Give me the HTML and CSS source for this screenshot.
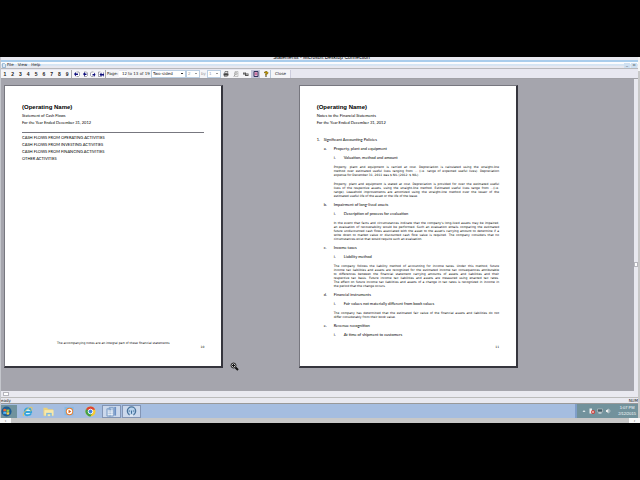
FILE: index.html
```html
<!DOCTYPE html>
<html lang="en">
<head>
    <meta charset="UTF-8">
    <meta name="viewport" content="width=device-width, initial-scale=1.0">
    <title>Statement Print Preview</title>
    <link rel="stylesheet" href="styles.css">
</head>
<body>
    <div class="session">
        <div class="desktop">
            <header class="titlebar"><span>Statements - Microsoft Desktop Connection</span></header>
            <nav class="menubar">
                <svg class="doc-icon" viewBox="0 0 8 10"><path d="M1 1h4l2 2v6H1z" fill="#dfeaf5" stroke="#5689b5"/></svg>
                <button>File</button>
                <button>View</button>
                <button>Help</button>
                <span class="window-buttons"><button>_</button><button>▫</button></span>
            </nav>
            <div class="toolbar">
                <div class="numbers">
                    <button>1</button><button>2</button><button>3</button><button>4</button><button>5</button><button>6</button><button>7</button><button>8</button><button>9</button>
                </div>
                <div class="steps">
                    <button aria-label="First page"><svg viewBox="0 0 12 12"><path d="M5 2h5l1 2v5l-2 2H5" fill="#fff" stroke="#556"/><path d="M0 6l4-4v3h4v3H4v3z" fill="#10107c"/></svg></button>
                    <button aria-label="Previous page"><svg viewBox="0 0 12 12"><path d="M4 2h5l2 2v5l-2 2H4" fill="#fff" stroke="#556"/><path d="M2 6l4-4v3h3v3H6v3z" fill="#10107c"/></svg></button>
                    <button aria-label="Next page"><svg viewBox="0 0 12 12"><path d="M7 2H3L1 4v5l2 2h4" fill="#fff" stroke="#556"/><path d="M11 7L8 3v3H5v3h3v3z" fill="#10107c"/></svg></button>
                    <button aria-label="Last page"><svg viewBox="0 0 12 12"><path d="M5 2H1v9h5" fill="#fff" stroke="#556"/><path d="M3 7l4-4v3h4v3H7v3zM11 3h1v8h-1z" fill="#10107c"/></svg></button>
                </div>
                <label class="page-label" for="page">Page:</label>
                <input class="page-input" id="page" type="text" value="12">
                <span class="page-total">to 13 of 19</span>
                <select class="layout-select" aria-label="Layout"><option>Two-sided</option></select>
                <select class="small-select" id="across" aria-label="Pages across" disabled><option>2</option></select>
                <label class="by" for="down">by</label>
                <select class="small-select" id="down" disabled><option>1</option></select>
                <div class="tools">
                    <button aria-label="Print"><svg viewBox="0 0 12 12"><path d="M4 1h6L9 5H3z" fill="#ddd" stroke="#333"/><path d="M1 5h10v4H9v2H2V9H1z" fill="#444"/><path d="M3 8h5v1H3z" fill="#ccc"/></svg></button>
                    <button aria-label="Zoom"><svg viewBox="0 0 12 12"><path d="M4 1h6v10H3V5z" fill="#eee" stroke="#999"/><circle cx="6" cy="5" r="2" fill="none" stroke="#777"/><path d="M5 7l-4 4" stroke="#777"/></svg></button>
                    <button aria-label="Margins"><svg viewBox="0 0 12 12"><path d="M0 3h6v2h5v5H4V7H0z" fill="#555"/><path d="M1 4h3M6 7h4" stroke="#eee"/></svg></button>
                    <button class="pressed" aria-label="Page frame"><svg viewBox="0 0 12 12"><path d="M2 1h8v10H2z" fill="#e7bfd2" stroke="#30305c" stroke-width="2"/><path d="M6 3v5" stroke="#b02070" stroke-width="2"/></svg></button>
                    <button aria-label="Help"><svg viewBox="0 0 12 12"><path d="M3 4V2l2-1h3l2 2v2L7 7v2H5V6l2-2z" fill="#c9a000" stroke="#5a4700"/><path d="M5 10h2v2H5z" fill="#333"/></svg></button>
                </div>
                <button class="close">Close</button>
            </div>
            <div class="workspace">
                <main class="pages">
                    <article class="sheet">
                        <h1>(Operating Name)</h1>
                        <p class="sub">Statement of Cash Flows</p>
                        <p class="sub">For the Year Ended December 31, 2012</p>
                        <hr>
                        <p class="flow">CASH FLOWS FROM OPERATING ACTIVITIES</p>
                        <p class="flow">CASH FLOWS FROM INVESTING ACTIVITIES</p>
                        <p class="flow">CASH FLOWS FROM FINANCING ACTIVITIES</p>
                        <p class="flow">OTHER ACTIVITIES</p>
                        <footer>
                            <p class="footnote">The accompanying notes are an integral part of these financial statements</p>
                            <p class="folio">10</p>
                        </footer>
                    </article>
                    <article class="sheet">
                        <h1>(Operating Name)</h1>
                        <p class="sub">Notes to the Financial Statements</p>
                        <p class="sub">For the Year Ended December 31, 2012</p>
                        <div class="notes">
                            <h2 class="level-1"><span>1.</span>Significant Accounting Policies</h2>
                            <h3 class="level-2"><span>a.</span>Property, plant and equipment</h3>
                            <h4 class="level-3"><span>i.</span>Valuation, method and amount</h4>
                            <p class="body">
                                <span>Property, plant and equipment is carried at cost. Depreciation is calculated using the straight-line</span>
                                <span>method over estimated useful lives ranging from ... (i.e. range of expected useful lives). Depreciation</span>
                                <span>expense for December 31, 2011 was $ NIL (2012: $ NIL).</span>
                            </p>
                            <p class="body">
                                <span>Property, plant and equipment is stated at cost. Depreciation is provided for over the estimated useful</span>
                                <span>lives of the respective assets, using the straight-line method. Estimated useful lives range from ...(i.e.</span>
                                <span>range). Leasehold improvements are amortized using the straight-line method over the lesser of the</span>
                                <span>estimated useful life of the asset or the life of the lease.</span>
                            </p>
                            <h3 class="level-2"><span>b.</span>Impairment of long-lived assets</h3>
                            <h4 class="level-3"><span>i.</span>Description of process for evaluation</h4>
                            <p class="body">
                                <span>In the event that facts and circumstances indicate that the company's long-lived assets may be impaired,</span>
                                <span>an evaluation of recoverability would be performed. Such an evaluation entails comparing the estimated</span>
                                <span>future undiscounted cash flows associated with the asset to the asset's carrying amount to determine if a</span>
                                <span>write down to market value or discounted cash flow value is required. The company considers that no</span>
                                <span>circumstances exist that would require such an evaluation.</span>
                            </p>
                            <h3 class="level-2"><span>c.</span>Income taxes</h3>
                            <h4 class="level-3"><span>i.</span>Liability method</h4>
                            <p class="body">
                                <span>The company follows the liability method of accounting for income taxes. Under this method, future</span>
                                <span>income tax liabilities and assets are recognized for the estimated income tax consequences attributable</span>
                                <span>to differences between the financial statement carrying amounts of assets and liabilities and their</span>
                                <span>respective tax basis. Future income tax liabilities and assets are measured using enacted tax rates.</span>
                                <span>The effect on future income tax liabilities and assets of a change in tax rates is recognized in income in</span>
                                <span>the period that the change occurs.</span>
                            </p>
                            <h3 class="level-2"><span>d.</span>Financial instruments</h3>
                            <h4 class="level-3"><span>i.</span>Fair values not materially different from book values</h4>
                            <p class="body">
                                <span>The company has determined that the estimated fair value of the financial assets and liabilities do not</span>
                                <span>differ considerably from their book value.</span>
                            </p>
                            <h3 class="level-2"><span>e.</span>Revenue recognition</h3>
                            <h4 class="level-3"><span>i.</span>At time of shipment to customers</h4>
                        </div>
                        <footer>
                            <p class="folio">11</p>
                        </footer>
                    </article>
                    <svg class="cursor" viewBox="0 0 18 18"><circle cx="7" cy="7" r="5" fill="#c8c8cc" stroke="#222" stroke-width="2"/><path d="M4 7h6M7 4v6" stroke="#111" stroke-width="2"/><path d="M11 11l5 5" stroke="#111" stroke-width="4"/></svg>
                </main>
                <div class="v-scroll"><i></i></div>
            </div>
            <div class="h-scroll"><i></i></div>
            <div class="status"><span>eady</span><span>NUM</span></div>
            <div class="taskbar">
                <button class="start" aria-label="Start"><svg viewBox="0 0 24 24"><circle cx="12" cy="12" r="11" fill="#1d5c94"/><path d="M5 7q3-2 6 0v5q-3-2-6 0z" fill="#ee6a35"/><path d="M12 7q3 2 6 0v5q-3 2-6 0z" fill="#9bcf48"/><path d="M5 13q3-2 6 0v5q-3-2-6 0z" fill="#54b5ee"/><path d="M12 13q3 2 6 0v5q-3 2-6 0z" fill="#ffd54b"/></svg></button>
                <button aria-label="Internet Explorer"><svg viewBox="0 0 24 24"><path d="M6 13h14q0-8-7-8t-7 8 7 7q5 0 7-4" fill="#d8f0fb" stroke="#35a3dc" stroke-width="4"/><path d="M3 22Q0 17 9 9t13-6q2 3-4 9" fill="none" stroke="#e6c657" stroke-width="2"/></svg></button>
                <button aria-label="Explorer"><svg viewBox="0 0 24 24"><path d="M1 4h8l2 3h11v14H1z" fill="#ecd27d"/><path d="M3 9h20v12H3z" fill="#f7e8aa"/><path d="M7 15h12v7H7z" fill="#7eb9dc"/><path d="M10 18h6v4h-6z" fill="#f7e8aa"/></svg></button>
                <button aria-label="Media Player"><svg viewBox="0 0 24 24"><path d="M1 2h20v18H1z" fill="#86b9e3"/><circle cx="12" cy="12" r="8" fill="#ec7a26"/><circle cx="12" cy="12" r="6" fill="#fff"/><path d="M10 8l6 4-6 4z" fill="#d26322"/></svg></button>
                <button aria-label="Chrome"><svg viewBox="0 0 24 24"><circle cx="12" cy="12" r="11" fill="#f5c935"/><path d="M12 12L2 7q3-6 10-6t10 7H12z" fill="#dc4236"/><path d="M12 12L2 7q-3 7 2 12t8 4l4-8z" fill="#43a047"/><circle cx="12" cy="12" r="5" fill="#3f7fe0" stroke="#fff" stroke-width="2"/></svg></button>
                <button class="open" aria-label="Statements"><svg viewBox="0 0 24 24"><path d="M2 6h8v16H2zM7 3h9v19H7z" fill="#b9cde6" stroke="#7c9cc5" stroke-width="2"/><path d="M4 11h11M4 15h11M4 19h11" stroke="#fff" stroke-width="2"/><path d="M18 2h4v19h-4z" fill="#6c90c4"/></svg></button>
                <button class="open" aria-label="Gauge"><svg viewBox="0 0 24 24"><circle cx="12" cy="11" r="9" fill="#b9d3ee" stroke="#4a749c" stroke-width="3"/><path d="M12 10v7M6 11h3M15 11h3" stroke="#33658f" stroke-width="2"/><path d="M8 18h8v5H8z" fill="#dfe7f2"/></svg></button>
                <div class="tray">
                    <svg viewBox="0 0 12 12"><path d="M3 8l3-4 3 4z" fill="#dce8ea"/></svg>
                    <svg viewBox="0 0 12 12"><path d="M1 1h5v10H1z" fill="#eee"/><circle cx="8" cy="8" r="4" fill="#d0403a"/><path d="M6 6l4 4M10 6l-4 4" stroke="#fff"/></svg>
                    <svg viewBox="0 0 12 12"><path d="M1 2h10v6H1z" fill="#455e68" stroke="#ddd"/><path d="M3 10h6" stroke="#eee" stroke-width="2"/></svg>
                    <svg viewBox="0 0 12 12"><path d="M2 4h2l3-3v10L4 8H2z" fill="#eee"/><path d="M9 3q2 3 0 6" fill="none" stroke="#eee"/></svg>
                    <p class="clock">1:07 PM<br>2/12/2015</p>
                </div>
            </div>
        </div>
        <div class="host-v"><i></i></div>
    </div>
    <div class="host-h"><button>‹</button><button>›</button></div>
</body>
</html>
```
FILE: styles.css
```css
* {
    box-sizing: border-box;
}
body {
    display: flex;
    flex-direction: column;
    height: 100vh;
    margin: 0;
    padding: 57px 0;
    background-color: black;
    color: #222;
    font-family: "DejaVu Sans", Verdana, sans-serif;
    font-size: 4px;
    line-height: 6px;
}
p, h1, h2, h3, h4 {
    margin: 0;
    font-weight: normal;
}
button, input, select {
    margin: 0;
    padding: 0;
    border: none;
    background: none;
    color: inherit;
    font: inherit;
}
svg {
    display: block;
}
.session {
    display: flex;
    flex: 1;
    min-height: 0;
}
.desktop {
    display: flex;
    flex: 1;
    flex-direction: column;
    min-width: 0;
    border-left: 1px solid #c4c6cc;
}
/* the window sits slightly above the visible area, so its caption is cut */
.titlebar {
    display: flex;
    justify-content: center;
    height: 5px;
    padding-left: 4px;
    overflow: hidden;
    border-bottom: 2px solid #a9cdec;
    background-color: #e9eaf0;
    color: black;
    font-family: "Liberation Sans", Arial, sans-serif;
    font-size: 5px;
    line-height: 1px;
}
.menubar {
    display: flex;
    align-items: center;
    gap: 4px;
    height: 7px;
    padding: 0 1px;
    border-bottom: 1px solid #b8b8bc;
    background: linear-gradient(#fbfcfe 30%, #c9dff2 45%, #e8e9f0 70%);
}
.doc-icon {
    width: 4px;
    height: 5px;
    margin-right: -3px;
}
.window-buttons {
    display: flex;
    gap: 1px;
    margin-left: auto;
}
.window-buttons button {
    width: 6px;
    height: 5px;
    background-color: #cfe0f1;
    line-height: 4px;
}
.toolbar {
    display: flex;
    align-items: center;
    height: 10px;
    border-bottom: 1px solid #a0a0a6;
    background-color: #e7e7f0;
}
.toolbar > * {
    flex: none;
}
.numbers, .steps, .tools {
    display: flex;
    align-items: center;
}
.numbers, .steps, .page-label, .page-total, .by, .tools {
    height: 8px;
    background-color: #f5f5f8;
    line-height: 8px;
}
.numbers {
    width: 71px;
    border-right: 1px solid #aaa;
}
.numbers button {
    flex: 1;
    font-family: "Liberation Sans", Arial, sans-serif;
    font-size: 5px;
    font-weight: bold;
}
.steps {
    gap: 2px;
    width: 34px;
    padding-left: 2px;
    border-right: 1px solid #aaa;
}
.steps svg, .tools svg {
    width: 6px;
    height: 6px;
}
.page-label {
    width: 13px;
    padding-left: 1px;
}
.page-input {
    width: 8px;
    height: 6px;
    background-color: white;
    text-align: right;
}
.page-total {
    width: 24px;
    padding-left: 1px;
    white-space: nowrap;
}
.layout-select, .small-select {
    appearance: none;
    height: 8px;
    padding-left: 1px;
    border: 1px solid #bccfe3;
    background: linear-gradient(#333, #333) right 2px center / 2px 1px no-repeat white;
    line-height: 6px;
}
.layout-select {
    width: 35px;
}
.small-select {
    width: 14px;
    background-image: linear-gradient(#999, #999);
    color: #999;
    opacity: 1;
}
.by {
    width: 7px;
    color: #999;
    text-align: center;
}
.tools {
    gap: 1px;
    width: 50px;
    padding-left: 1px;
    border-right: 1px solid #b8c8dc;
}
.tools button {
    display: flex;
    align-items: center;
    justify-content: center;
    width: 9px;
    height: 8px;
}
.tools .pressed {
    background-color: #c4c6da;
}
.close {
    width: 20px;
    height: 8px;
    border-right: 1px solid #ccd;
    background-color: #f5f5f8;
}
.workspace {
    display: flex;
    flex: 1;
    min-height: 0;
}
.pages {
    position: relative;
    display: flex;
    flex: 1;
    align-items: flex-start;
    gap: 12%;
    padding: 6px 3px;
    background-color: #a5a5ad;
}
.sheet {
    display: flex;
    flex: none;
    flex-direction: column;
    width: 35%;
    aspect-ratio: 218 / 281;
    padding: 17px 17px;
    border: 1px solid #77777f;
    border-right: 2px solid #35353d;
    border-bottom: 2px solid #35353d;
    background-color: white;
    color: black;
    font-size: 3px;
    line-height: 4px;
    white-space: nowrap;
}
.sheet h1 {
    margin-bottom: 3px;
    font-family: "Liberation Sans", Arial, sans-serif;
    font-size: 6px;
    font-weight: bold;
    line-height: 8px;
}
.sub, .flow {
    margin-bottom: 3px;
    font-family: Lato, "Liberation Sans", sans-serif;
    font-size: 4px;
}
.sheet hr {
    width: 100%;
    height: 1px;
    margin: 4px 0 3px;
    border: none;
    background-color: #77777f;
}
.sheet footer {
    margin-top: auto;
}
.footnote {
    text-align: center;
}
.folio {
    text-align: right;
}
.notes {
    padding-top: 10px;
}
.notes h2, .notes h3, .notes h4 {
    display: flex;
    margin-bottom: 5px;
    font-family: Lato, "Liberation Sans", sans-serif;
    font-size: 4px;
}
.notes h2 span {
    width: 7px;
}
.notes h3 span, .notes h4 span {
    width: 10px;
}
.level-2 {
    padding-left: 7px;
}
.level-3 {
    padding-left: 17px;
}
.body {
    margin: 0 0 5px 17px;
}
.body span {
    display: block;
    text-align-last: justify;
}
.body span:last-child {
    text-align-last: left;
}
/* magnifier pointer floats over the preview */
.cursor {
    position: absolute;
    top: 283px;
    left: 229px;
    width: 9px;
    height: 9px;
}
.v-scroll {
    width: 4px;
    padding-top: 183px;
    background-color: #e9e9f0;
}
.v-scroll i {
    display: block;
    height: 5px;
    border: 1px solid #b5b5bc;
    background-color: white;
}
.h-scroll {
    height: 7px;
    padding: 1px 2px;
    border-bottom: 1px solid #bbb;
    background-color: #e9e9f0;
}
.h-scroll i {
    display: block;
    width: 6px;
    height: 4px;
    border: 1px solid #b5b5bc;
    background-color: white;
}
.status {
    display: flex;
    justify-content: space-between;
    height: 6px;
    border-bottom: 1px solid #999;
    background-color: #e9e9f0;
    line-height: 5px;
}
.taskbar {
    display: flex;
    align-items: center;
    height: 14px;
    background-color: #a5bde0;
}
.taskbar button {
    display: flex;
    align-items: center;
    justify-content: center;
    width: 21px;
    height: 13px;
}
.taskbar button svg {
    width: 11px;
    height: 11px;
}
.taskbar .start {
    justify-content: flex-start;
    width: 16px;
    background-color: #70929d;
}
.taskbar .open {
    width: 19px;
    margin-left: 1px;
    border: 1px solid #8395b5;
    background-color: #cbd8ec;
}
.tray {
    display: flex;
    align-items: center;
    gap: 2px;
    height: 14px;
    margin-left: auto;
    padding: 0 2px 0 4px;
    border-left: 2px solid #7f9ec9;
    background-color: #72929c;
    color: white;
}
.tray svg {
    width: 6px;
    height: 6px;
}
.clock {
    padding-left: 5px;
    font-family: "Liberation Sans", Arial, sans-serif;
    line-height: 6px;
    text-align: center;
}
.host-v {
    width: 2px;
    background-color: #c8c8c8;
}
.host-v i {
    display: block;
    height: 14px;
    background-color: #f4f4f4;
}
.host-h {
    display: flex;
    justify-content: space-between;
    height: 5px;
    background-color: #c8c8c8;
}
.host-h button {
    width: 11px;
    background-color: #f8f8f8;
    line-height: 4px;
}
```
